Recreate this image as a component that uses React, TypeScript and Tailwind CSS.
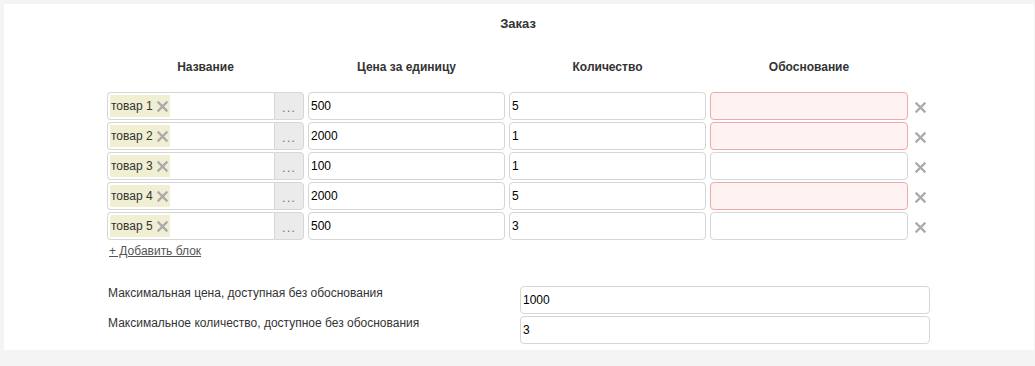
import React from "react";

const rows = [
  { name: "товар 1", price: "500", qty: "5", err: true },
  { name: "товар 2", price: "2000", qty: "1", err: true },
  { name: "товар 3", price: "100", qty: "1", err: false },
  { name: "товар 4", price: "2000", qty: "5", err: true },
  { name: "товар 5", price: "500", qty: "3", err: false },
];

function XIcon({ size, className }: { size: number; className?: string }) {
  return (
    <svg width={size} height={size} viewBox="0 0 12 12" className={className}>
      <path d="M1.5 1.5 L10.5 10.5 M10.5 1.5 L1.5 10.5" stroke="currentColor" strokeWidth="2" strokeLinecap="butt" />
    </svg>
  );
}

export default function App() {
  return (
    <div
      className="w-[1035px] h-[366px] bg-[#f4f4f4] pt-[4px] pl-[4px] text-[#333]"
      style={{ fontFamily: '"Liberation Sans", Arial, sans-serif' }}
    >
      <div className="w-[1030px] h-[346px] bg-white flex flex-col">
        <div className="pt-[11px] h-[29px] text-center text-[13px] leading-[18px] font-bold pr-[2px]">Заказ</div>
        <div className="pl-[103px] pt-[26px]">
          <div className="grid grid-cols-[197px_197px_197px_198px] gap-x-[4px] text-[12px] leading-[16px] font-bold text-center">
            <div>Название</div>
            <div>Цена за единицу</div>
            <div>Количество</div>
            <div>Обоснование</div>
          </div>
          <div className="mt-[17px] flex flex-col gap-[2px]">
            {rows.map((r) => (
              <div key={r.name} className="flex items-start gap-x-[4px] h-[28px]">
                <div className="w-[197px] h-[28px] flex">
                  <div className="flex-1 h-full border border-[#d6d6d6] border-r-0 rounded-l-[4px] p-[2px] flex items-stretch">
                    <div className="bg-[#f0efd4] flex items-center pl-[1px] pr-[1px] gap-[3px] text-[12px]">
                      <span>{r.name}</span>
                      <XIcon size={13} className="text-[#aaa]" />
                    </div>
                  </div>
                  <div className="w-[30px] h-full bg-[#ebebeb] border border-[#d6d6d6] rounded-r-[4px] flex items-end justify-center pb-[6px] text-[13px] leading-[10px] tracking-[1px] text-[#777]">
                    ...
                  </div>
                </div>
                <div className="w-[197px] h-[28px] border border-[#d6d6d6] rounded-[4px] pl-[2px] flex items-center text-[12px] text-black">
                  {r.price}
                </div>
                <div className="w-[197px] h-[28px] border border-[#d6d6d6] rounded-[4px] pl-[2px] flex items-center text-[12px] text-black">
                  {r.qty}
                </div>
                <div
                  className={
                    r.err
                      ? "w-[198px] h-[28px] border border-[#f0a9a9] bg-[#fff2f2] rounded-[4px]"
                      : "w-[198px] h-[28px] border border-[#d6d6d6] bg-white rounded-[4px]"
                  }
                />
                <div className="pl-[2px] pt-[9px]">
                  <XIcon size={13} className="text-[#aaa]" />
                </div>
              </div>
            ))}
          </div>
          <div className="mt-[3px] pl-[2px] text-[12px] leading-[16px] text-[#555]">
            <span className="underline">+ Добавить блок</span>
          </div>
          <div className="mt-[27px] flex flex-col gap-[2px]">
            <div className="flex items-start h-[28px]">
              <div className="w-[413px] pl-[1px] -mt-[1px] text-[12px] leading-[16px]">
                Максимальная цена, доступная без обоснования
              </div>
              <div className="w-[410px] h-[28px] border border-[#d6d6d6] rounded-[4px] pl-[2px] flex items-center text-[12px] text-black">
                1000
              </div>
            </div>
            <div className="flex items-start h-[28px]">
              <div className="w-[413px] pl-[1px] -mt-[1px] text-[12px] leading-[16px]">
                Максимальное количество, доступное без обоснования
              </div>
              <div className="w-[410px] h-[28px] border border-[#d6d6d6] rounded-[4px] pl-[2px] flex items-center text-[12px] text-black">
                3
              </div>
            </div>
          </div>
        </div>
      </div>
    </div>
  );
}
